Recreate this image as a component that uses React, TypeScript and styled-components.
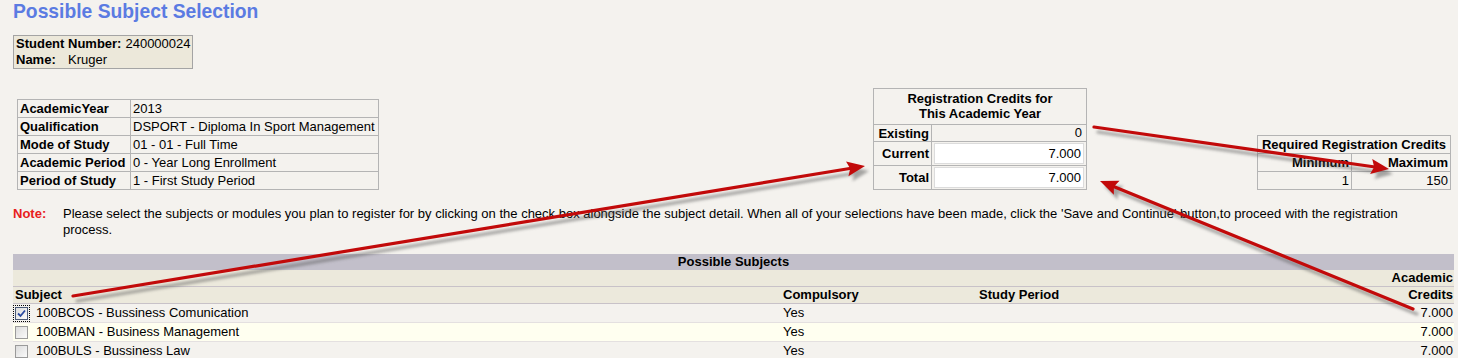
import React from "react";
import styled, { createGlobalStyle } from "styled-components";

const Global = createGlobalStyle`
  html, body { margin: 0; padding: 0; }
  body {
    background: #f4f2ee;
    font-family: "Liberation Sans", Arial, sans-serif;
    font-size: 13px;
    color: #000;
  }
`;

const Root = styled.div`
  position: relative;
  width: 1458px;
  height: 358px;
  overflow: hidden;
`;

const Page = styled.div`
  width: 1441px;
  padding: 0 4px 0 13px;
`;

const Title = styled.h1`
  margin: 0;
  font-size: 19.3px;
  line-height: 23px;
  font-weight: bold;
  color: #5b7be2;
`;

const StudentBox = styled.div`
  display: inline-block;
  margin-top: 12px;
  border: 1px solid #a4a4a4;
  background: #ece8da;
  padding: 0 1px 0 2px;
  line-height: 16px;
`;

const BoxLine = styled.div`
  white-space: nowrap;
`;

const BoxLabel = styled.b<{ $w?: number }>`
  display: inline-block;
  ${(p) => (p.$w ? `width: ${p.$w}px;` : "margin-right: 4px;")}
`;

const TopRow = styled.div`
  display: grid;
  grid-template-columns: 860px 384px 194px;
  align-items: end;
  margin-top: 19px;
`;

const InfoTable = styled.table`
  margin-left: 4px;
  width: 362px;
  border-collapse: collapse;
  border: 1px solid #a8a8a8;
  td {
    border: 1px solid #b4b4b4;
    padding: 0 2px;
    height: 17px;
    line-height: 16px;
    white-space: nowrap;
  }
`;

const LabelCell = styled.td`
  font-weight: bold;
  width: 108px;
`;

const CreditsTable = styled.table`
  width: 214px;
  border-collapse: collapse;
  border: 1px solid #a8a8a8;
  th, td {
    border: 1px solid #b4b4b4;
  }
`;

const CaptionCell = styled.th`
  font-weight: bold;
  text-align: center;
  line-height: 15px;
  padding: 2px 0 3px;
`;

const RowLabel = styled.th`
  width: 53px;
  text-align: right;
  font-weight: bold;
  padding: 0 2px;
  white-space: nowrap;
`;

const PlainValue = styled.td`
  text-align: right;
  padding: 0 4px;
  height: 16px;
  line-height: 16px;
`;

const BoxedCell = styled.td`
  padding: 1px 2px;
`;

const ValueBox = styled.div`
  background: #ffffff;
  border: 1px solid #dcdcdc;
  height: 19px;
  line-height: 19px;
  text-align: right;
  padding-right: 2px;
`;

const RequiredTable = styled.table`
  width: 194px;
  border-collapse: collapse;
  border: 1px solid #a8a8a8;
  th, td {
    border: 1px solid #b4b4b4;
    padding: 0 2px;
    height: 17px;
    line-height: 16px;
    white-space: nowrap;
  }
`;

const ReqHead = styled.th<{ $align?: string; $w?: number }>`
  font-weight: bold;
  text-align: ${(p) => p.$align || "right"};
  ${(p) => (p.$w ? `width: ${p.$w}px;` : "")}
`;

const ReqValue = styled.td`
  text-align: right;
`;

const NoteRow = styled.div`
  display: flex;
  margin-top: 16px;
  line-height: 16px;
`;

const NoteLabel = styled.div`
  width: 50px;
  flex: none;
  color: #e8201c;
  font-weight: bold;
`;

const NoteText = styled.div`
  width: 1365px;
`;

const SubjectsTable = styled.table`
  margin-top: 16px;
  width: 1441px;
  border-collapse: collapse;
  table-layout: fixed;
`;

const BarCell = styled.th`
  background: #c2bfca;
  height: 16px;
  line-height: 16px;
  padding: 0;
  text-align: center;
  font-weight: bold;
`;

const HeadRow = styled.tr`
  background: #ece9dc;
  border-bottom: 1px solid #c8c2c8;
`;

const HeadCell = styled.th<{ $align?: string }>`
  font-weight: bold;
  text-align: ${(p) => p.$align || "left"};
  padding: 0 1px 0 2px;
  height: 16px;
  line-height: 16px;
  white-space: nowrap;
`;

const DataRow = styled.tr<{ $alt?: boolean }>`
  background: ${(p) => (p.$alt ? "#fffff0" : "#f4f2ee")};
  border-bottom: 1px solid #e4e0e0;
`;

const DataCell = styled.td<{ $align?: string }>`
  text-align: ${(p) => p.$align || "left"};
  padding: 0 1px 0 2px;
  height: 18px;
  line-height: 16px;
  white-space: nowrap;
`;

const SubjectWrap = styled.div`
  display: flex;
  align-items: center;
  gap: 8px;
`;

const Check = styled.span<{ $checked?: boolean }>`
  box-sizing: border-box;
  width: 13px;
  height: 13px;
  flex: none;
  display: inline-flex;
  align-items: center;
  justify-content: center;
  border: 1px solid ${(p) => (p.$checked ? "#4a5a78" : "#9a9a9a")};
  background: linear-gradient(135deg, #dcdcdc, #fafafa);
  outline: ${(p) => (p.$checked ? "1px dotted #000" : "none")};
  outline-offset: 1px;
`;

const Overlay = styled.svg`
  position: absolute;
  left: 0;
  top: 0;
  pointer-events: none;
`;

type ArrowProps = { x1: number; y1: number; x2: number; y2: number };

function ArrowShape({ x1, y1, x2, y2, color }: ArrowProps & { color: string }) {
  const dx = x2 - x1;
  const dy = y2 - y1;
  const len = Math.hypot(dx, dy);
  const ux = dx / len;
  const uy = dy / len;
  const hl = 18;
  const hw = 7.5;
  const bx = x2 - ux * hl;
  const by = y2 - uy * hl;
  const px = -uy;
  const py = ux;
  const pts = `${x2},${y2} ${bx + px * hw},${by + py * hw} ${bx + ux * 3},${by + uy * 3} ${bx - px * hw},${by - py * hw}`;
  return (
    <g>
      <line x1={x1} y1={y1} x2={bx + ux * 4} y2={by + uy * 4} stroke={color} strokeWidth={3.2} strokeLinecap="round" />
      <polygon points={pts} fill={color} />
    </g>
  );
}

function Arrow(p: ArrowProps) {
  return (
    <g>
      <g transform="translate(4 5)" filter="url(#blur)" opacity={0.5}>
        <ArrowShape {...p} color="#555" />
      </g>
      <ArrowShape {...p} color="#c20a0a" />
    </g>
  );
}

const subjects = [
  { code: "100BCOS - Bussiness Comunication", checked: true },
  { code: "100BMAN - Business Management", checked: false },
  { code: "100BULS - Bussiness Law", checked: false },
];

const info: [string, string][] = [
  ["AcademicYear", "2013"],
  ["Qualification", "DSPORT - Diploma In Sport Management"],
  ["Mode of Study", "01 - 01 - Full Time"],
  ["Academic Period", "0 - Year Long Enrollment"],
  ["Period of Study", "1 - First Study Period"],
];

export default function App() {
  return (
    <Root>
      <Global />
      <Page>
        <Title>Possible Subject Selection</Title>
        <StudentBox>
          <BoxLine>
            <BoxLabel>Student Number:</BoxLabel>240000024
          </BoxLine>
          <BoxLine>
            <BoxLabel $w={52}>Name:</BoxLabel>Kruger
          </BoxLine>
        </StudentBox>

        <TopRow>
          <InfoTable>
            <tbody>
              {info.map(([k, v]) => (
                <tr key={k}>
                  <LabelCell>{k}</LabelCell>
                  <td>{v}</td>
                </tr>
              ))}
            </tbody>
          </InfoTable>

          <CreditsTable>
            <tbody>
              <tr>
                <CaptionCell colSpan={2}>
                  Registration Credits for
                  <br />
                  This Academic Year
                </CaptionCell>
              </tr>
              <tr>
                <RowLabel>Existing</RowLabel>
                <PlainValue>0</PlainValue>
              </tr>
              <tr>
                <RowLabel>Current</RowLabel>
                <BoxedCell>
                  <ValueBox>7.000</ValueBox>
                </BoxedCell>
              </tr>
              <tr>
                <RowLabel>Total</RowLabel>
                <BoxedCell>
                  <ValueBox>7.000</ValueBox>
                </BoxedCell>
              </tr>
            </tbody>
          </CreditsTable>

          <RequiredTable>
            <tbody>
              <tr>
                <ReqHead colSpan={2} $align="center">
                  Required Registration Credits
                </ReqHead>
              </tr>
              <tr>
                <ReqHead $w={89}>Minimum</ReqHead>
                <ReqHead>Maximum</ReqHead>
              </tr>
              <tr>
                <ReqValue>1</ReqValue>
                <ReqValue>150</ReqValue>
              </tr>
            </tbody>
          </RequiredTable>
        </TopRow>

        <NoteRow>
          <NoteLabel>Note:</NoteLabel>
          <NoteText>
            Please select the subjects or modules you plan to register for by clicking on the check box alongside the
            subject detail. When all of your selections have been made, click the 'Save and Continue' button,to proceed
            with the registration process.
          </NoteText>
        </NoteRow>

        <SubjectsTable>
          <colgroup>
            <col style={{ width: 768 }} />
            <col style={{ width: 196 }} />
            <col />
            <col style={{ width: 100 }} />
          </colgroup>
          <thead>
            <tr>
              <BarCell colSpan={4}>Possible Subjects</BarCell>
            </tr>
            <HeadRow>
              <HeadCell />
              <HeadCell />
              <HeadCell />
              <HeadCell $align="right">Academic</HeadCell>
            </HeadRow>
            <HeadRow>
              <HeadCell>Subject</HeadCell>
              <HeadCell>Compulsory</HeadCell>
              <HeadCell>Study Period</HeadCell>
              <HeadCell $align="right">Credits</HeadCell>
            </HeadRow>
          </thead>
          <tbody>
            {subjects.map((s, i) => (
              <DataRow key={s.code} $alt={i === 1}>
                <DataCell>
                  <SubjectWrap>
                    <Check $checked={s.checked}>
                      {s.checked && (
                        <svg width="9" height="9" viewBox="0 0 9 9">
                          <path d="M1 4.5 L3.5 7 L8 1.5" fill="none" stroke="#2a4aa0" strokeWidth="1.8" />
                        </svg>
                      )}
                    </Check>
                    <span>{s.code}</span>
                  </SubjectWrap>
                </DataCell>
                <DataCell>Yes</DataCell>
                <DataCell />
                <DataCell $align="right">7.000</DataCell>
              </DataRow>
            ))}
          </tbody>
        </SubjectsTable>
      </Page>

      <Overlay width={1458} height={358} viewBox="0 0 1458 358">
        <defs>
          <filter id="blur" x="-10%" y="-10%" width="120%" height="120%">
            <feGaussianBlur stdDeviation="1.6" />
          </filter>
        </defs>
        <Arrow x1={73} y1={296} x2={865} y2={166} />
        <Arrow x1={1094} y1={127} x2={1389} y2={169} />
        <Arrow x1={1413} y1={309} x2={1100} y2={181} />
      </Overlay>
    </Root>
  );
}
